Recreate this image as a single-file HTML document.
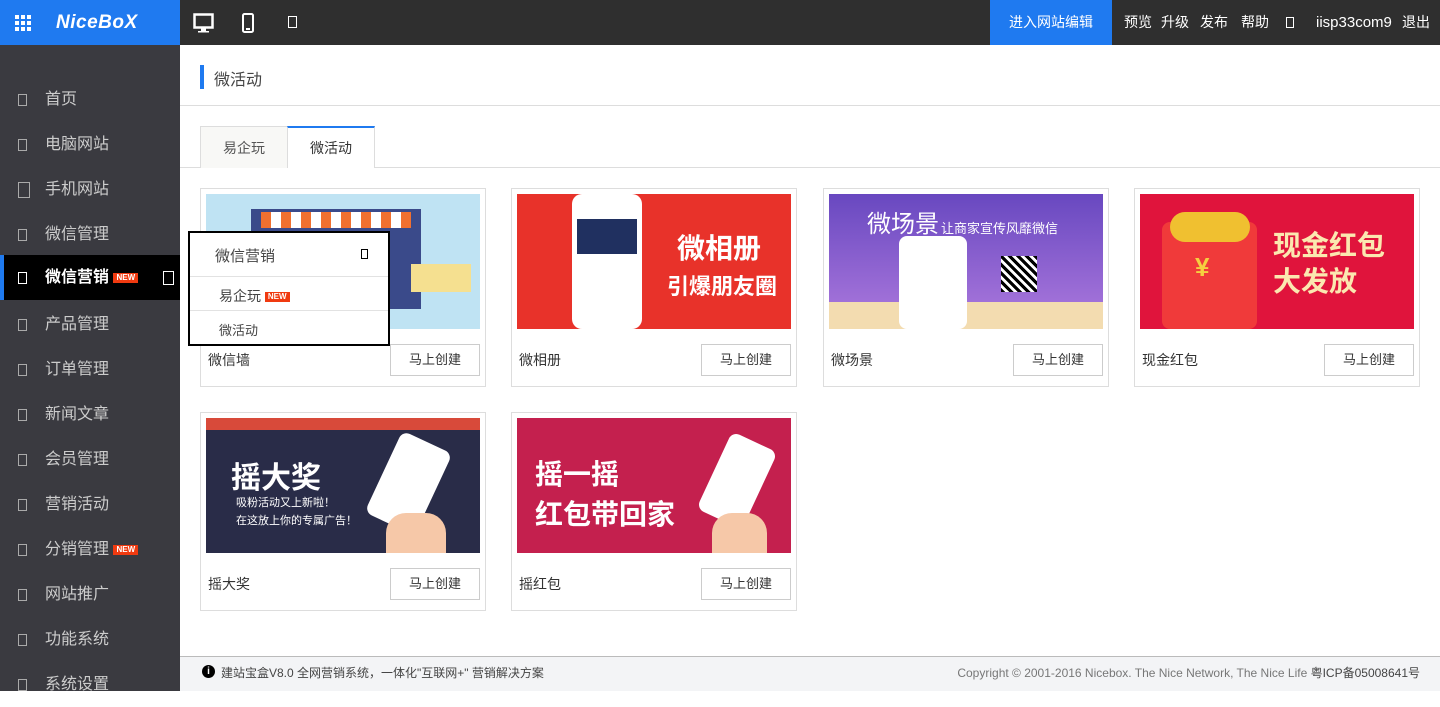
<!DOCTYPE html>
<html><head><meta charset="utf-8"><style>
*{margin:0;padding:0;box-sizing:border-box}
body{width:1440px;height:691px;overflow:hidden;font-family:"Liberation Sans","Noto Sans CJK SC",sans-serif;background:#fff;position:relative;color:#333}
.top{position:absolute;left:0;top:0;width:1440px;height:45px;background:#2f2f2f}
.logo{position:absolute;left:0;top:0;width:180px;height:45px;background:#1f7af0;color:#fff}
.side{position:absolute;left:0;top:45px;width:180px;height:646px;background:#3a3a40}
.si{position:absolute;left:0;width:180px;height:45px;line-height:45px;color:#ccc;font-size:16px}
.si .ic{position:absolute;left:18px;top:17px;width:9px;height:12px;border:1px solid #aaa}
.si span.t{position:absolute;left:45px}
.new{display:inline-block;background:#f03a10;color:#fff;font-size:8px;line-height:10px;padding:0 3px;font-weight:bold;vertical-align:middle}
.card{position:absolute;width:286px;height:199px;border:1px solid #ddd}
.card .img{position:absolute;left:5px;top:5px;width:274px;height:135px;overflow:hidden}
.card .lb{position:absolute;left:7px;top:161px;font-size:14px;color:#333}
.card .bt{position:absolute;left:189px;top:155px;width:90px;height:32px;border:1px solid #ccc;text-align:center;line-height:30px;font-size:13px;color:#333}
.big{position:absolute;color:#fff;font-weight:bold}
.tn{position:absolute;top:0;line-height:45px;color:#fff;font-size:14px;white-space:nowrap}
</style></head><body>
<div class="top">
 <div class="logo">
  <svg style="position:absolute;left:15px;top:15px" width="17" height="17" fill="#fff"><rect x="0" y="0" width="4" height="4"/><rect x="6" y="0" width="4" height="4"/><rect x="12" y="0" width="4" height="4"/><rect x="0" y="6" width="4" height="4"/><rect x="6" y="6" width="4" height="4"/><rect x="12" y="6" width="4" height="4"/><rect x="0" y="12" width="4" height="4"/><rect x="6" y="12" width="4" height="4"/><rect x="12" y="12" width="4" height="4"/></svg>
  <div style="position:absolute;left:56px;top:0;line-height:45px;font-size:19px;font-weight:bold;letter-spacing:0.5px;font-style:italic">NiceBoX</div>
 </div>
 <svg style="position:absolute;left:193px;top:13px" width="22" height="20"><rect x="1.5" y="1.5" width="18" height="13" fill="none" stroke="#fff" stroke-width="2.5"/><rect x="8" y="15" width="5" height="3" fill="#fff"/><rect x="5" y="18" width="11" height="1.5" fill="#fff"/></svg>
 <svg style="position:absolute;left:242px;top:13px" width="12" height="20"><rect x="1" y="1" width="10" height="18" rx="1.5" fill="none" stroke="#fff" stroke-width="2"/><rect x="4" y="15" width="4" height="2" fill="#fff"/></svg>
 <div style="position:absolute;left:288px;top:16px;width:9px;height:12px;border:1px solid #fff"></div>
 <div style="position:absolute;left:990px;top:0;width:122px;height:45px;background:#1f7af0;color:#fff;font-size:14px;line-height:45px;text-align:center">进入网站编辑</div>
 <div class="tn" style="left:1124px">预览</div>
 <div class="tn" style="left:1161px">升级</div>
 <div class="tn" style="left:1200px">发布</div>
 <div class="tn" style="left:1241px">帮助</div>
 <div style="position:absolute;left:1286px;top:17px;width:8px;height:11px;border:1px solid #fff"></div>
 <div class="tn" style="left:1316px;font-size:15px">iisp33com9</div>
 <div class="tn" style="left:1402px">退出</div>
</div>
<div class="side">
 <div class="si" style="top:32px"><i class="ic"></i><span class="t">首页</span></div>
 <div class="si" style="top:77px"><i class="ic"></i><span class="t">电脑网站</span></div>
 <div class="si" style="top:122px"><i class="ic" style="width:12px;height:16px;top:15px"></i><span class="t">手机网站</span></div>
 <div class="si" style="top:167px"><i class="ic"></i><span class="t">微信管理</span></div>
 <div class="si" style="top:210px;background:#000;color:#fff;font-weight:bold"><div style="position:absolute;left:0;top:0;width:4px;height:45px;background:#1f7af0"></div><i class="ic" style="border-color:#fff"></i><span class="t">微信营销 <span class="new">NEW</span></span><i style="position:absolute;left:163px;top:16px;width:11px;height:14px;border:1px solid #fff"></i></div>
 <div class="si" style="top:257px"><i class="ic"></i><span class="t">产品管理</span></div>
 <div class="si" style="top:302px"><i class="ic"></i><span class="t">订单管理</span></div>
 <div class="si" style="top:347px"><i class="ic"></i><span class="t">新闻文章</span></div>
 <div class="si" style="top:392px"><i class="ic"></i><span class="t">会员管理</span></div>
 <div class="si" style="top:437px"><i class="ic"></i><span class="t">营销活动</span></div>
 <div class="si" style="top:482px"><i class="ic"></i><span class="t">分销管理 <span class="new">NEW</span></span></div>
 <div class="si" style="top:527px"><i class="ic"></i><span class="t">网站推广</span></div>
 <div class="si" style="top:572px"><i class="ic"></i><span class="t">功能系统</span></div>
 <div class="si" style="top:617px"><i class="ic"></i><span class="t">系统设置</span></div>
</div>
<div style="position:absolute;left:200px;top:65px;width:4px;height:24px;background:#1f7af0"></div>
<div style="position:absolute;left:214px;top:66px;font-size:16px;color:#444">微活动</div>
<div style="position:absolute;left:180px;top:105px;width:1260px;height:1px;background:#ddd"></div>
<div style="position:absolute;left:180px;top:167px;width:1260px;height:1px;background:#ddd"></div>
<div style="position:absolute;left:200px;top:126px;width:88px;height:42px;background:#f8f8f6;border:1px solid #ddd;border-bottom:none;text-align:center;line-height:42px;font-size:14px;color:#555">易企玩</div>
<div style="position:absolute;left:287px;top:126px;width:88px;height:42px;background:#fff;border:1px solid #ddd;border-top:2px solid #1f7af0;border-bottom:none;text-align:center;line-height:40px;font-size:14px;color:#333">微活动</div>

<div class="card" style="left:200px;top:188px"><div class="img" style="background:#bfe3f3"><div style="position:absolute;left:45px;top:15px;width:170px;height:100px;background:#3a4a8a"></div><div style="position:absolute;left:55px;top:18px;width:150px;height:16px;background:repeating-linear-gradient(90deg,#f07030 0 10px,#fff 10px 20px)"></div><div style="position:absolute;left:205px;top:70px;width:60px;height:28px;background:#f5e090"></div></div><div class="lb">微信墙</div><div class="bt">马上创建</div></div>
<div class="card" style="left:511px;top:188px"><div class="img" style="background:#e8322a"><div style="position:absolute;left:55px;top:0;width:70px;height:135px;background:#fff;border-radius:10px"></div><div style="position:absolute;left:60px;top:25px;width:60px;height:35px;background:#203060"></div><div class="big" style="left:160px;top:33px;font-size:28px">微相册</div><div class="big" style="left:150px;top:75px;font-size:22px">引爆朋友圈</div></div><div class="lb">微相册</div><div class="bt">马上创建</div></div>
<div class="card" style="left:823px;top:188px"><div class="img" style="background:linear-gradient(#6848c0,#a070d8 80%,#f3dcb0 80%)"><div class="big" style="left:38px;top:10px;font-size:24px;font-weight:normal">微场景</div><div style="position:absolute;left:112px;top:24px;color:#fff;font-size:13px">让商家宣传风靡微信</div><div style="position:absolute;left:70px;top:42px;width:68px;height:93px;background:#fff;border-radius:8px"></div><div style="position:absolute;left:172px;top:62px;width:36px;height:36px;background:repeating-linear-gradient(45deg,#000 0 3px,#fff 3px 6px)"></div></div><div class="lb">微场景</div><div class="bt">马上创建</div></div>
<div class="card" style="left:1134px;top:188px"><div class="img" style="background:#e0143c"><div style="position:absolute;left:22px;top:28px;width:95px;height:107px;background:#f03a3a;border-radius:8px"></div><div style="position:absolute;left:30px;top:18px;width:80px;height:30px;background:#f0c030;border-radius:15px"></div><div class="big" style="left:55px;top:58px;font-size:26px;color:#f5d040">¥</div><div class="big" style="left:133px;top:30px;font-size:28px;color:#fbe8b0">现金红包</div><div class="big" style="left:133px;top:66px;font-size:28px;color:#fbe8b0">大发放</div></div><div class="lb">现金红包</div><div class="bt">马上创建</div></div>
<div class="card" style="left:200px;top:412px"><div class="img" style="background:#292c48"><div style="position:absolute;left:0;top:0;width:274px;height:12px;background:#d84a3a"></div><div class="big" style="left:25px;top:35px;font-size:30px">摇大奖</div><div style="position:absolute;left:30px;top:76px;color:#fff;font-size:11px;line-height:18px">吸粉活动又上新啦！<br>在这放上你的专属广告！</div><div style="position:absolute;left:175px;top:20px;width:55px;height:90px;background:#fff;border-radius:8px;transform:rotate(25deg)"></div><div style="position:absolute;left:180px;top:95px;width:60px;height:40px;background:#f6c8a8;border-radius:20px 20px 0 0"></div></div><div class="lb">摇大奖</div><div class="bt">马上创建</div></div>
<div class="card" style="left:511px;top:412px"><div class="img" style="background:#c4204e"><div class="big" style="left:18px;top:35px;font-size:28px">摇一摇</div><div class="big" style="left:18px;top:75px;font-size:28px">红包带回家</div><div style="position:absolute;left:195px;top:20px;width:50px;height:85px;background:#fff;border-radius:8px;transform:rotate(25deg)"></div><div style="position:absolute;left:195px;top:95px;width:55px;height:40px;background:#f6c8a8;border-radius:20px 20px 0 0"></div></div><div class="lb">摇红包</div><div class="bt">马上创建</div></div>

<div style="position:absolute;left:188px;top:231px;width:202px;height:115px;background:#fff;border:2px solid #000">
 <div style="position:absolute;left:25px;top:12px;font-size:15px;color:#444">微信营销</div>
 <div style="position:absolute;left:171px;top:16px;width:7px;height:10px;border:1px solid #000"></div>
 <div style="position:absolute;left:0;top:43px;width:198px;height:1px;background:#e2e2e2"></div>
 <div style="position:absolute;left:29px;top:53px;font-size:14px;color:#444">易企玩 <span class="new">NEW</span></div>
 <div style="position:absolute;left:0;top:77px;width:198px;height:1px;background:#e2e2e2"></div>
 <div style="position:absolute;left:29px;top:87px;font-size:13px;color:#444">微活动</div>
</div>

<div style="position:absolute;left:180px;top:656px;width:1260px;height:35px;background:#f3f4f6;border-top:1px solid #bbb">
 <div style="position:absolute;left:22px;top:8px;width:13px;height:13px;border-radius:50%;background:#000;color:#fff;font-size:10px;font-weight:bold;text-align:center;line-height:13px">i</div>
 <div style="position:absolute;left:41px;top:7px;font-size:12px;color:#444">建站宝盒V8.0 全网营销系统，一体化"互联网+" 营销解决方案</div>
 <div style="position:absolute;right:20px;top:7px;font-size:12px;color:#777">Copyright © 2001-2016 Nicebox. The Nice Network, The Nice Life <span style="color:#444">粤ICP备05008641号</span></div>
</div>
</body></html>
